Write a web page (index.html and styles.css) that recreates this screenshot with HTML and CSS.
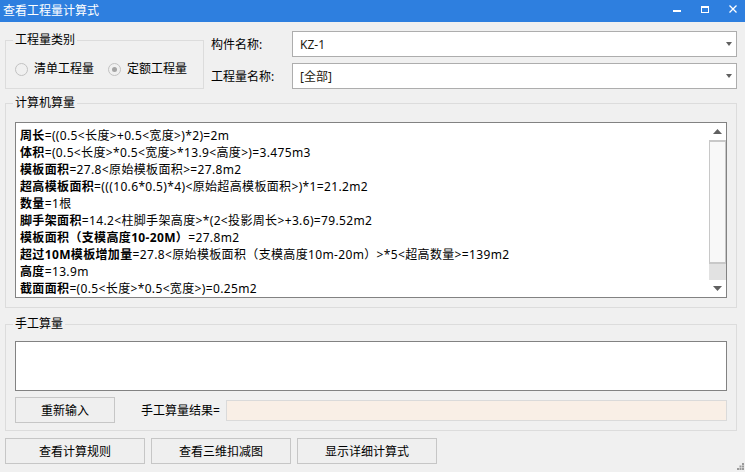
FILE: index.html
```html
<!DOCTYPE html>
<html>
<head>
    <meta charset="UTF-8">
    <title>查看工程量计算式</title>
    <link rel="stylesheet" href="styles.css">
</head>
<body>

<header class="titlebar">
    <span class="title">查看工程量计算式</span>
    <div class="controls">
        <svg class="ctl" width="8" height="8" viewBox="0 0 8 8"><rect x="0" y="5" width="8" height="2" fill="#fff"/></svg>
        <svg class="ctl" width="8" height="8" viewBox="0 0 8 8"><rect x="0.5" y="1.5" width="7" height="6" fill="none" stroke="#fff"/><rect x="0" y="1" width="8" height="2" fill="#fff"/></svg>
        <svg class="ctl" width="8" height="8" viewBox="0 0 8 8"><path d="M0.5 0.5 L7.5 7.5 M7.5 0.5 L0.5 7.5" stroke="#fff" stroke-width="1.3"/></svg>
    </div>
</header>

<main class="content">
    <div class="top-row">
        <fieldset class="group group-type">
            <legend>工程量类别</legend>
            <div class="radios">
                <label class="radio"><span class="dot"></span>清单工程量</label>
                <label class="radio checked"><span class="dot"></span>定额工程量</label>
            </div>
        </fieldset>
        <div class="fields">
            <div class="field">
                <span class="field-label">构件名称:</span>
                <div class="combo">
                    <span class="combo-text">KZ-1</span>
                    <svg class="arrow" width="6" height="4" viewBox="0 0 6 4"><path d="M0 0 H6 L3 4 Z" fill="#606060"/></svg>
                </div>
            </div>
            <div class="field">
                <span class="field-label">工程量名称:</span>
                <div class="combo">
                    <span class="combo-text">[全部]</span>
                    <svg class="arrow" width="6" height="4" viewBox="0 0 6 4"><path d="M0 0 H6 L3 4 Z" fill="#606060"/></svg>
                </div>
            </div>
        </div>
    </div>

    <fieldset class="group group-calc">
        <legend>计算机算量</legend>
        <div class="result-box">
            <div class="result-lines">
                <div class="line"><b>周长</b>=((0.5&lt;长度&gt;+0.5&lt;宽度&gt;)*2)=2m</div>
                <div class="line"><b>体积</b>=(0.5&lt;长度&gt;*0.5&lt;宽度&gt;*13.9&lt;高度&gt;)=3.475m3</div>
                <div class="line"><b>模板面积</b>=27.8&lt;原始模板面积&gt;=27.8m2</div>
                <div class="line"><b>超高模板面积</b>=(((10.6*0.5)*4)&lt;原始超高模板面积&gt;)*1=21.2m2</div>
                <div class="line"><b>数量</b>=1根</div>
                <div class="line"><b>脚手架面积</b>=14.2&lt;柱脚手架高度&gt;*(2&lt;投影周长&gt;+3.6)=79.52m2</div>
                <div class="line"><b>模板面积（支模高度10-20M）</b>=27.8m2</div>
                <div class="line"><b>超过10M模板增加量</b>=27.8&lt;原始模板面积（支模高度10m-20m）&gt;*5&lt;超高数量&gt;=139m2</div>
                <div class="line"><b>高度</b>=13.9m</div>
                <div class="line"><b>截面面积</b>=(0.5&lt;长度&gt;*0.5&lt;宽度&gt;)=0.25m2</div>
            </div>
            <div class="scrollbar">
                <div class="sb-btn">
                    <svg width="9" height="5" viewBox="0 0 9 5"><path d="M0 5 L4.5 0 L9 5 Z" fill="#606060"/></svg>
                </div>
                <div class="sb-thumb"></div>
                <div class="sb-track"></div>
                <div class="sb-btn">
                    <svg width="9" height="5" viewBox="0 0 9 5"><path d="M0 0 L4.5 5 L9 0 Z" fill="#606060"/></svg>
                </div>
            </div>
        </div>
    </fieldset>

    <fieldset class="group group-manual">
        <legend>手工算量</legend>
        <div class="manual-input"></div>
        <div class="manual-row">
            <button class="btn btn-reset">重新输入</button>
            <span class="manual-label">手工算量结果=</span>
            <div class="manual-result"></div>
        </div>
    </fieldset>

    <div class="actions">
        <button class="btn btn-wide">查看计算规则</button>
        <button class="btn btn-wide">查看三维扣减图</button>
        <button class="btn btn-wide">显示详细计算式</button>
    </div>

    <svg class="grip" width="7" height="7" viewBox="0 0 7 7">
        <rect x="5" y="0" width="2" height="2" fill="#9a9a9a"/>
        <rect x="2.5" y="2.5" width="2" height="2" fill="#9a9a9a"/>
        <rect x="5" y="2.5" width="2" height="2" fill="#9a9a9a"/>
        <rect x="0" y="5" width="2" height="2" fill="#9a9a9a"/>
        <rect x="2.5" y="5" width="2" height="2" fill="#9a9a9a"/>
        <rect x="5" y="5" width="2" height="2" fill="#9a9a9a"/>
    </svg>
</main>

</body>
</html>
```

FILE: styles.css
```css
*, *::after, *::before {
    box-sizing: border-box;
}

html, body {
    width: 745px;
    height: 472px;
    margin: 0;
    padding: 0;
    overflow: hidden;
    background-color: #f0f0f0;
    font-family: "Noto Sans", "Noto Sans CJK SC", sans-serif;
    font-size: 12px;
    color: #000;
}

.titlebar {
    display: flex;
    justify-content: space-between;
    height: 22px;
    padding: 0 8px 0 3px;
    background: #2e7fdf;
    color: #fff;
}

.titlebar .title {
    line-height: 22px;
}

.titlebar .controls {
    display: flex;
    gap: 20px;
    padding-top: 5px;
}

.content {
    position: relative;
    height: 450px;
    padding: 0 8px 0 5px;
}

/* group boxes */
.group {
    margin: 0;
    min-width: 0;
    border: 1px solid #dcdcdc;
    padding: 0 9px;
}

.group legend {
    margin-left: -2px;
    padding: 0 2px;
    line-height: 16px;
}

.top-row {
    display: flex;
    align-items: flex-start;
}

.group-type {
    width: 199px;
    margin-top: 10px;
    padding-top: 13px;
    padding-bottom: 11px;
}

.radios {
    display: flex;
    height: 16px;
    align-items: center;
}

.radio {
    display: flex;
    align-items: center;
    gap: 6px;
    line-height: 16px;
}

.radio + .radio {
    margin-left: 14px;
}

.radio .dot {
    display: flex;
    align-items: center;
    justify-content: center;
    width: 13px;
    height: 13px;
    border: 1px solid #c2c2c2;
    border-radius: 50%;
}

.radio.checked .dot::after {
    content: "";
    width: 5px;
    height: 5px;
    border-radius: 50%;
    background: #a4a4a4;
}

.fields {
    flex: 1;
    margin: 9px 0 0 7px;
}

.field {
    display: flex;
    align-items: center;
    height: 26px;
}

.field + .field {
    margin-top: 6px;
}

.field-label {
    width: 81px;
}

.combo {
    flex: 1;
    display: flex;
    align-items: center;
    justify-content: space-between;
    height: 26px;
    padding: 0 4px 0 7px;
    background: #fff;
    border: 1px solid #adadad;
}

.combo-text {
    color: #1e1a10;
}

/* computed quantities */
.group-calc {
    margin-top: 6px;
    padding-top: 11px;
    padding-bottom: 9px;
}

.result-box {
    display: flex;
    height: 176px;
    background: #fff;
    border: 1px solid #828282;
}

.result-lines {
    flex: 1;
    padding: 4px 0 0 4px;
    line-height: 17px;
    letter-spacing: 0.35px;
    white-space: nowrap;
    overflow: hidden;
}

.result-lines b {
    font-weight: bold;
}

.scrollbar {
    display: flex;
    flex-direction: column;
    width: 17px;
    background: #fff;
}

.sb-btn {
    display: flex;
    align-items: center;
    justify-content: center;
    height: 17px;
}

.sb-thumb {
    height: 124px;
    background: #f8f8f8;
    border: 1px solid #c8c8c8;
    border-top-width: 2px;
    border-bottom-width: 2px;
}

.sb-track {
    flex: 1;
    background: #e2e2e2;
}

/* manual quantities */
.group-manual {
    margin-top: 8px;
    padding-top: 9px;
    padding-bottom: 7px;
}

.manual-input {
    height: 50px;
    background: #fff;
    border: 1px solid #828282;
}

.manual-row {
    display: flex;
    align-items: center;
    height: 26px;
    margin-top: 6px;
}

.manual-label {
    margin: 0 6px 0 26px;
}

.manual-result {
    flex: 1;
    height: 21px;
    background: #f9efe6;
    border: 1px solid #dadada;
}

.btn {
    height: 26px;
    padding: 0;
    background: #efefef;
    border: 1px solid #c6c6c6;
    font-family: inherit;
    font-size: 12px;
    color: #000;
}

.btn-reset {
    width: 100px;
}

.actions {
    display: flex;
    gap: 6px;
    margin-top: 7px;
}

.btn-wide {
    width: 140px;
}

.grip {
    position: absolute;
    right: 1px;
    bottom: 2px;
}
```
